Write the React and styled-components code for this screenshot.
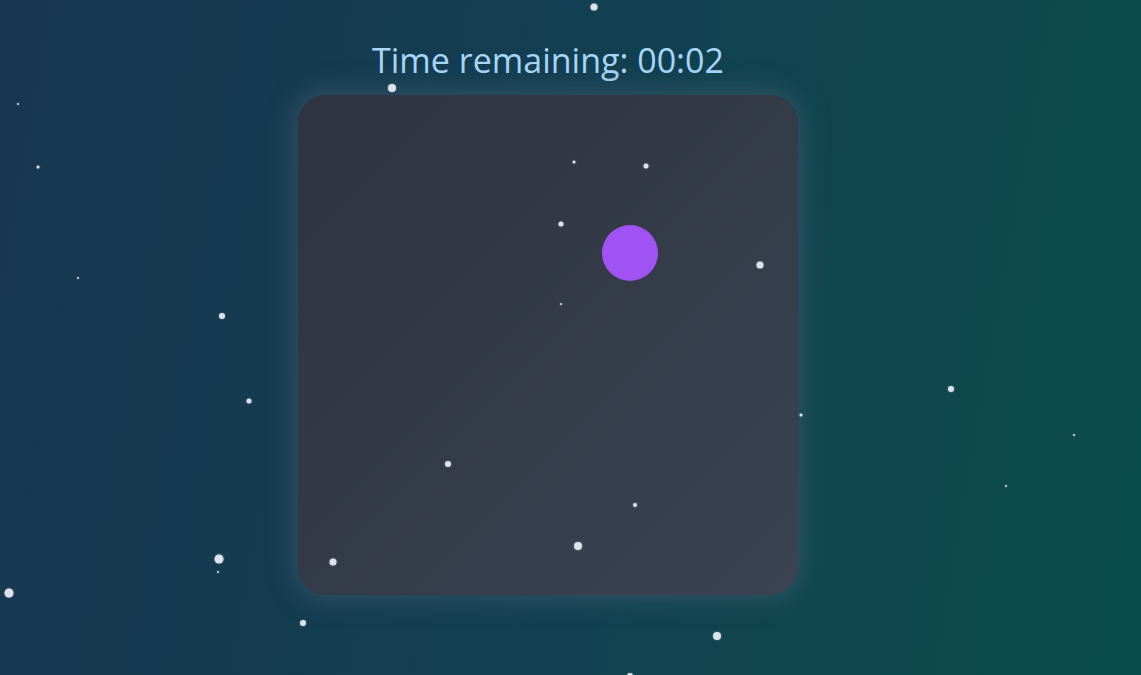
import React from "react";
import styled, { createGlobalStyle } from "styled-components";

const GlobalStyle = createGlobalStyle`
  html, body { margin: 0; padding: 0; height: 100%; }
  body {
    font-family: "Open Sans", "Noto Sans", "DejaVu Sans", sans-serif;
    overflow: hidden;
  }
`;

const Page = styled.div`
  position: relative;
  width: 100vw;
  height: 100vh;
  overflow: hidden;
  background: linear-gradient(100deg, #193650 0%, #133f52 45%, #0b4d4c 100%);
  display: flex;
  flex-direction: column;
  align-items: center;
  padding: 36px 45px 0 0;
  box-sizing: border-box;
`;

const Title = styled.h1`
  margin: 0;
  font-weight: 400;
  font-size: 34px;
  line-height: 48px;
  color: #a9d6f7;
  letter-spacing: 0;
`;

const Board = styled.div`
  position: relative;
  margin-top: 11px;
  width: 500px;
  height: 500px;
  border-radius: 28px;
  background: linear-gradient(135deg, #2d333f 0%, #3b4252 100%);
  box-shadow: 0 0 24px 5px rgba(76, 100, 120, 0.5);
`;

const Player = styled.div`
  position: absolute;
  width: 56px;
  height: 56px;
  border-radius: 50%;
  background: #a052f3;
`;

const StarLayer = styled.div`
  position: absolute;
  inset: 0;
  pointer-events: none;
  z-index: 2;
`;

const Star = styled.span`
  position: absolute;
  border-radius: 50%;
  background: #dde3ec;
  transform: translate(-50%, -50%);
  box-shadow: 0 0 2px rgba(220, 230, 240, 0.5);
`;

const stars = [
  [594, 7, 7], [18, 104, 2], [392, 88, 8], [38, 167, 3], [574, 162, 3],
  [646, 166, 5], [561, 224, 5], [760, 265, 7], [78, 278, 2], [561, 304, 2],
  [222, 316, 6], [249, 401, 5], [951, 389, 6], [801, 415, 3], [1074, 435, 2],
  [448, 464, 6], [1006, 486, 2], [635, 505, 4], [578, 546, 8], [219, 559, 9],
  [333, 562, 7], [218, 572, 2], [9, 593, 9], [303, 623, 6], [717, 636, 8],
  [630, 676, 6],
];

export default function App() {
  return (
    <>
      <GlobalStyle />
      <Page>
        <Title>Time remaining: 00:02</Title>
        <Board>
          <Player style={{ left: 304, top: 130 }} />
        </Board>
        <StarLayer>
          {stars.map(([x, y, s], i) => (
            <Star key={i} style={{ left: x, top: y, width: s, height: s }} />
          ))}
        </StarLayer>
      </Page>
    </>
  );
}
